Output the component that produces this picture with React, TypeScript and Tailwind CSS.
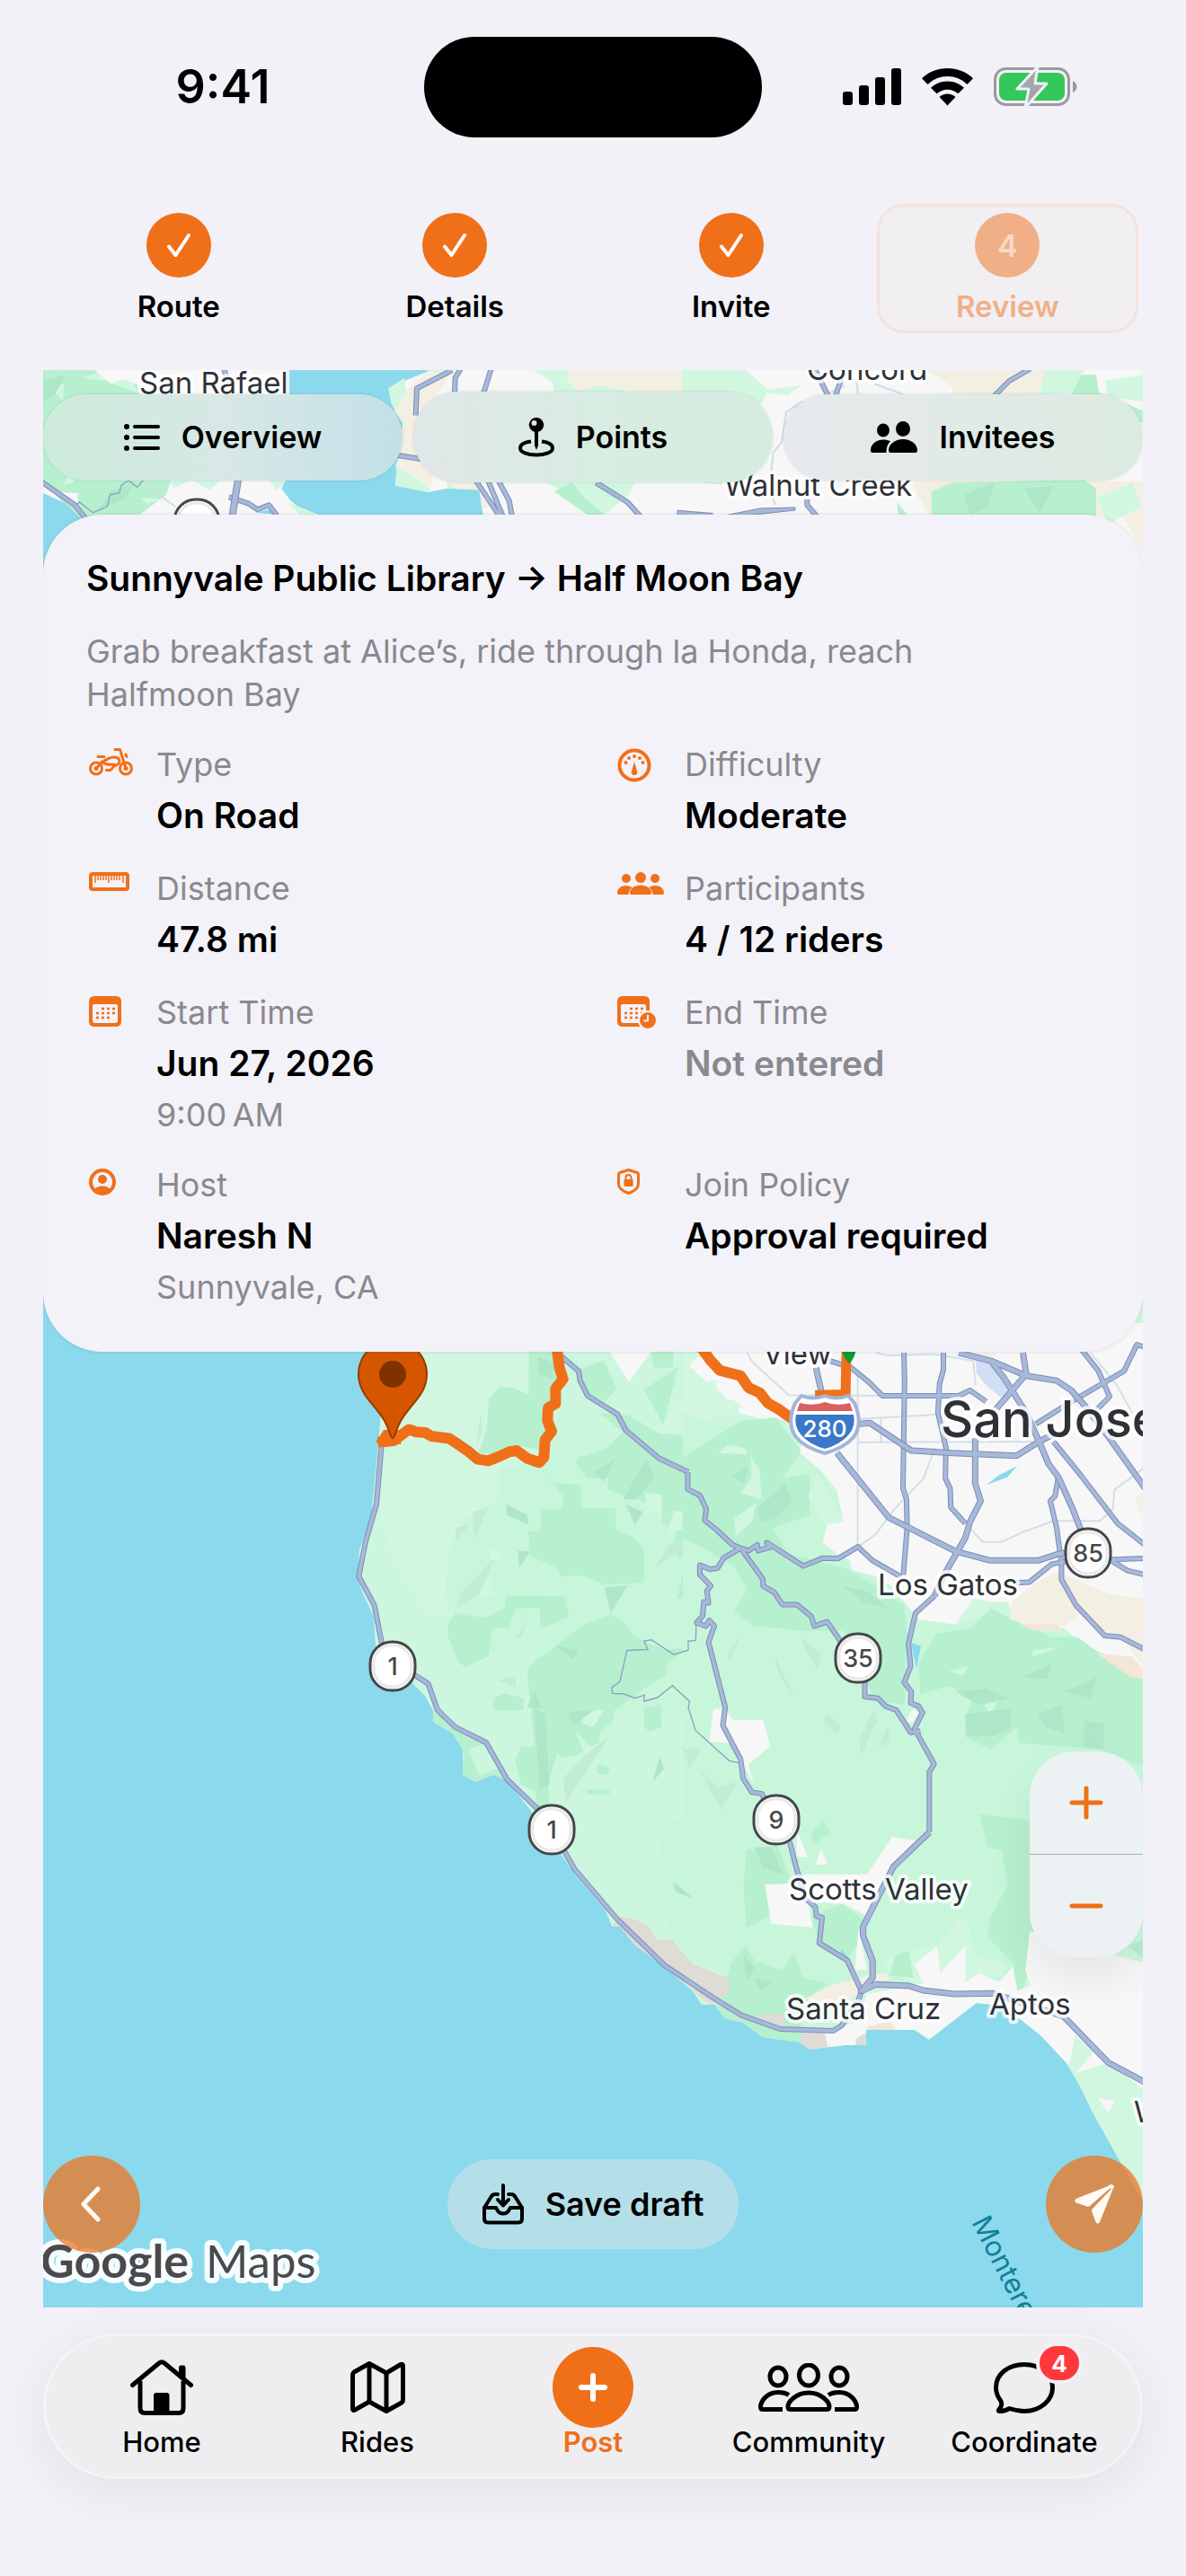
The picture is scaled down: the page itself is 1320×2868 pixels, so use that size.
import React, { useState } from 'react';

const ORANGE = '#f07019';

/* ---------- Map ---------- */

// Each tile keeps its own local grid and is placed on the map by a transform.
const TILE_WEST = 'translate(340 1480) scale(0.33333 0.35714)';
const TILE_EAST = 'translate(760 1480) scale(0.35714)';
const TILE_SOUTH = 'translate(340 1900) scale(0.625 0.33333)';
const TILE_NW = 'translate(40 404) scale(0.33333)';
const TILE_NE = 'translate(540 404) scale(0.33333)';

const GREEN = '#b6f0cf';
const MID = '#c8f6da';
const LIGHT = '#d1f7e1';
const SHADE = '#aee6c8';
const URBAN = '#f7f7f7';
const SAND = '#f4efe3';
const WATER = '#8bd9ed';

type Shape = [string, string];

const westShapes: Shape[] = [
    [LIGHT, 'M250,-10 L860,-10 L830,350 L760,420 L645,440 L650,520 L520,600 L470,720 L480,860 L415,890 L300,720 L255,600 L240,500Z'],
    [MID, 'M650,430 L780,420 L860,350 L1500,350 L1500,1218 L1030,1190 L1000,1290 L870,1250 L800,1020 L540,1000 L500,880 L465,830 L480,690 L520,600 L650,530Z'],
    [GREEN, 'M745,60 L860,60 L850,180 L830,250 L800,380 L700,360 L640,385 L575,390 L605,315 L612,215 L650,180 L700,183 L745,205Z'],
    [GREEN, 'M745,630 L785,630 L785,560 L1035,557 L1037,625 L1095,650 L1130,685 L1132,790 L1000,795 L925,768 L850,770 L840,745 L750,705Z'],
    [GREEN, 'M670,830 L865,832 L880,895 L785,935 L782,868 L700,870 L680,930 L625,930 L610,1020 L535,1052 L512,1040 L475,955 L475,920 L500,885 L600,900 L665,870Z'],
    [GREEN, 'M820,1000 L930,920 L1020,890 L1060,910 L1100,960 L1200,1000 L1275,990 L1205,1045 L1205,1075 L1100,1140 L1030,1190 L1030,1218 L985,1250 L980,1290 L900,1330 L860,1335 L840,1320 L810,1420 L815,1500 L770,1500 L770,1440 L720,1420 L700,1345 L720,1300 L765,1300 L745,1120 L740,1060 L770,1030Z'],
    [GREEN, 'M628,1150 L660,1135 L730,1150 L728,1187 L630,1187Z'],
    [GREEN, 'M1130,1180 L1185,1170 L1190,1240 L1150,1255 L1130,1240Z'],
    [GREEN, 'M975,1355 L1015,1365 L1010,1390 L975,1385Z M940,1435 L1015,1435 L1015,1450 L940,1450Z'],
    [GREEN, 'M980,262 L1080,268 L1180,325 L1275,330 L1375,320 L1370,410 L1430,430 L1500,450 L1500,870 L1400,860 L1300,830 L1240,840 L1270,720 L1235,700 L1235,640 L1190,600 L1190,570 L1140,540 L1070,520 L1010,500 L1010,465 L940,465 L905,420 L910,400 L1000,375 L1060,320Z'],
    [GREEN, 'M780,430 L830,480 L920,485 L920,560 L860,560 L860,520Z'],
    [GREEN, 'M900,130 L995,97 L1040,185 L1000,225 L940,200Z M1130,190 L1245,115 L1195,297Z M1150,60 L1230,60 L1225,120 L1165,120Z'],
    [GREEN, 'M418,1180 L440,1190 L500,1240 L600,1290 L545,1310 L580,1390 L640,1370 L670,1400 L630,1392 L570,1412 L525,1390 L527,1310 L495,1260 L430,1230Z'],
    [LIGHT, 'M1235,230 L1345,225 L1350,310 L1290,320 L1180,325Z M1135,510 L1190,515 L1190,575 L1140,570Z M1230,565 L1280,570 L1285,610 L1205,645Z M1370,320 L1500,310 L1500,420 L1372,410Z'],
    [LIGHT, 'M620,680 L662,705 L615,730Z M610,770 L632,832 L580,835Z M930,1190 L1000,1185 L960,1240 L925,1230Z M900,1250 L950,1300 L985,1290 L940,1340Z'],
    [SHADE, 'M775,85 L830,105 L825,155 L780,140Z M963,445 L1035,405 L995,475Z M1062,530 L1135,405 L1168,460 L1105,530Z M1070,545 L1128,570 L1100,610Z M670,545 L740,578 L745,608 L675,580Z M708,690 L750,692 L715,742Z'],
    [SHADE, 'M998,805 L1075,798 L1020,885Z M830,985 L910,1000 L895,1030Z M765,1130 L790,1180 L740,1178Z M870,1195 L965,1185 L895,1235Z M765,1180 L800,1200 L815,1420 L780,1430Z M1255,1300 L1325,1315 L1290,1350Z M1182,1330 L1197,1370 L1160,1410Z'],
    ['#c1edd5', 'M500,620 L545,610 L505,665Z M558,570 L610,555 L565,655Z M635,710 L575,830 L505,865 L520,820Z M585,260 L590,320 L570,365Z M640,1095 L700,1080 L705,1118Z M745,900 L720,960 L700,965Z M1018,1265 L870,1475 L860,1400 L930,1330Z M1320,1370 L1370,1410 L1440,1400 L1370,1465Z M1350,630 L1165,742 L1215,670Z'],
    [URBAN, 'M1010,60 L1160,60 L1080,165Z M1275,145 L1310,87 L1400,100 L1420,150 L1340,165Z M1365,165 L1440,160 L1500,190 L1410,220Z'],
];

const eastShapes: Shape[] = [
    [MID, 'M0,260 L400,400 L700,850 L1434,1000 L1434,1568 L0,1568Z'],
    [GREEN, 'M0,400 L180,285 L290,275 L370,380 L310,465 L395,450 L395,580 L280,620 L330,700 L520,750 L600,800 L690,860 L700,960 L690,1170 L600,1160 L500,940 L380,940 L220,925 L160,880 L200,810 L160,740 L60,680 L0,650Z'],
    [URBAN, 'M40,-20 L110,200 L175,260 L290,275 L330,290 L370,350 L365,385 L430,440 L480,500 L500,600 L450,610 L435,665 L480,700 L520,720 L525,750 L600,770 L650,800 L690,850 L735,905 L850,920 L900,880 L905,840 L960,850 L1010,850 L1040,910 L1130,940 L1190,930 L1250,990 L1310,1010 L1400,1080 L1440,1090 L1440,-20Z'],
    [LIGHT, 'M0,70 L60,73 L110,150 L100,185 L180,235 L170,270 L0,260Z M420,450 L500,600 L440,610 L390,520Z M905,840 L960,850 L920,900 L850,920Z'],
    [URBAN, 'M20,115 L45,85 L130,110 L140,150 L75,165Z M100,165 L180,160 L230,200 L140,220Z M170,260 L240,225 L300,270 L250,280Z'],
    [GREEN, 'M735,1040 L790,950 L900,930 L960,870 L1040,910 L1150,960 L1230,960 L1300,1010 L1434,1090 L1434,1360 L1300,1310 L1050,1290 L1040,1240 L960,1310 L880,1270 L880,1210 L900,1160 L830,1110 L740,1140Z'],
    [SAND, 'M1165,755 L1330,825 L1440,840 L1440,1060 L1360,950 L1290,935 L1250,880 L1190,925 L1090,920 L1020,905 L1025,850 L1100,790Z M905,73 L980,73 L965,100 L905,95Z M1408,525 L1440,505 L1440,575 L1420,570Z'],
    ['#f2e6d6', 'M1050,920 L1165,920 L1185,940 L1090,938Z M1290,1010 L1400,1020 L1434,1060 L1434,1090 L1395,1085Z'],
    [LIGHT, 'M140,360 L195,370 L200,390 L110,385Z M210,395 L240,440 L245,530 L180,510 L215,460Z M160,590 L230,540 L215,600 L165,645Z M830,1065 L890,1050 L870,1080Z M1090,1000 L1180,990 L1090,1020Z M940,1170 L980,1160 L960,1205Z'],
    [SHADE, 'M150,460 L205,425 L190,480Z M235,555 L320,480 L340,540 L290,590 L240,600Z M500,800 L580,820 L640,870 L560,850Z M1055,1085 L1150,1045 L1135,1090Z M1190,1130 L1290,1085 L1270,1150Z M850,1130 L940,1120 L1020,1150 L920,1170Z M880,1200 L960,1190 L1025,1180 L1020,1240 L960,1270 L885,1265Z M1105,1200 L1180,1170 L1190,1260 L1130,1240Z M1250,1220 L1315,1230 L1310,1310 L1250,1300Z'],
    ['#c1edd5', 'M180,950 L140,1010 L145,1040Z M285,1010 L320,1090 L355,1150 L300,1080Z M370,960 L430,1010 L420,1060 L380,1000Z M450,1200 L490,1230 L485,1260 L437,1232Z M595,1185 L605,1220 L555,1330 L550,1280Z M640,1240 L645,1290 L605,1300Z M0,1310 L60,1305 L20,1370Z M50,1370 L110,1430 L170,1410 L120,1500Z'],
    [URBAN, 'M95,1185 L130,1180 L155,1217 L250,1218 L273,1300 L205,1355 L220,1415 L185,1350 L150,1290 L82,1285Z M715,1183 L735,1195 L715,1225 L695,1225Z'],
    ['#d2def5', 'M913,95 L965,108 L1030,195 L990,212 L940,170 L915,135Z'],
    [WATER, 'M945,485 L985,455 L1043,425 L1010,462Z M710,976 L742,988 L728,1058Z'],
];

const southShapes: Shape[] = [
    [MID, 'M640,380 L800,380 L1434,380 L1434,900 L1000,930 L850,1000 L760,900 L690,850 L650,760 L620,600Z'],
    [LIGHT, 'M1040,830 L1130,790 L1160,710 L1180,720 L1190,830 L1250,860 L1240,900 L1090,930 L1030,880Z M1375,1090 L1500,1230 L1500,1700 L1470,1640 L1380,1270Z'],
    [GREEN, 'M785,480 L840,460 L860,560 L870,590 L820,600 L825,700 L785,740 L780,600Z M700,870 L750,905 L760,850 L785,800 L800,850 L850,880 L870,820 L885,905 L930,925 L895,975 L880,1080 L845,1077 L750,1000Z M900,700 L955,660 L1000,720 L985,790 L965,840 L915,790Z M1040,900 L1050,830 L1075,815 L1082,905Z M900,430 L920,375 L935,420 L905,460Z'],
    [GREEN, 'M1200,360 L1290,380 L1300,780 L1285,900 L1275,960 L1262,940 L1262,860 L1215,770 L1220,700 L1250,600 L1240,480 L1215,470Z M1465,800 L1500,770 L1500,850Z M730,990 L780,1030 L845,1077 L885,1090 L895,1130 L815,1105 L745,1040Z'],
    [SHADE, 'M800,470 L830,470 L850,560 L815,540Z M655,585 L690,640 L660,620Z M780,830 L800,870 L785,920Z M800,905 L830,920 L810,950Z'],
    ['#dfdcd5', 'M545,735 L562,703 L585,710 L610,730 L627,780 L652,778 L690,860 L750,905 L755,950 L722,998 L640,870 L585,795 L560,735Z M808,1030 L850,1025 L855,1065 L805,1045Z M885,1090 L925,1090 L930,1137 L898,1145 L880,1120Z'],
    [SAND, 'M890,975 L940,930 L1000,900 L1035,890 L1040,910 L990,960 L930,1000Z'],
    [URBAN, 'M1045,435 L1095,450 L1047,535 L1030,590 L1000,700 L960,660 L895,650 L903,738 L830,725 L818,595 L870,590 L890,560 L1000,560Z M875,415 L895,505 L875,500Z M918,475 L930,525 L908,530Z M985,740 L1000,880 L978,880Z'],
    [URBAN, 'M1000,960 L1100,925 L1085,860 L1125,800 L1130,890 L1175,800 L1175,920 L1200,890 L1235,920 L1260,870 L1268,950 L1290,930 L1282,880 L1290,750 L1500,860 L1500,1290 L1430,1190 L1372,1225 L1310,1100 L1270,1040 L1235,1000 L1195,990 L1110,1112 L1085,1080 L998,1080 L998,1132 L930,1137 L925,1090 L985,1050Z'],
    [LIGHT, 'M1370,1100 L1405,1150 L1372,1225 L1360,1200Z M1372,1225 L1430,1190 L1500,1290 L1500,1400 L1400,1320Z'],
    [URBAN, 'M1410,1307 L1442,1317 L1430,1357Z'],
    ['#dfdcd5', 'M980,1110 L998,1090 L998,1132 L980,1130Z'],
    ['#f2e6d6', 'M1000,1070 L1040,1050 L1053,1080 L1000,1080Z'],
    [WATER, 'M955,810 L966,840 L950,835Z'],
];

const nwShapes: Shape[] = [
    [URBAN, 'M24,24 L1560,24 L1560,560 L24,560Z'],
    [GREEN, 'M24,24 L330,24 L345,100 L450,300 L450,395 L435,440 L350,505 L165,540 L24,400Z'],
    [LIGHT, 'M50,85 L95,70 L90,125Z M150,50 L240,24 L320,60 L340,100 L230,60Z M90,410 L130,330 L125,400Z M350,450 L430,455 L370,470Z M450,395 L520,390 L460,420Z M520,390 L620,390 L580,425Z M780,392 L845,392 L800,425Z'],
    [SHADE, 'M24,60 L100,40 L60,110 L24,130Z M250,430 L330,400 L300,450 L200,500Z'],
    [URBAN, 'M195,24 L340,24 L345,75 L290,55 L250,70Z M30,430 L140,435 L140,470 L110,460Z'],
    [WATER, 'M24,435 L100,470 L170,540 L170,900 L24,900Z'],
    [WATER, 'M837,24 L1320,24 L1230,60 L1177,85 L1200,165 L1225,200 L1215,310 L1205,345 L1200,410 L1310,432 L1370,420 L1480,420 L1490,490 L1500,540 L945,540 L850,460 L820,420 L835,390Z M735,500 L780,490 L805,507Z'],
    [LIGHT, 'M1177,85 L1230,50 L1237,100 L1200,165 L1185,130Z M1205,345 L1315,415 L1312,432 L1200,410Z M1300,24 L1370,24 L1345,40Z M1370,395 L1470,395 L1480,425 L1375,420Z M840,465 L890,485 L945,507 L880,507Z'],
    [SAND, 'M1300,35 L1390,30 L1345,100 L1280,200 L1330,330 L1320,415 L1200,345 L1215,300 L1225,200 L1200,160 L1240,90Z M1370,395 L1460,400 L1510,480 L1490,490 L1480,420 L1400,420Z'],
];

const neShapes: Shape[] = [
    [LIGHT, 'M160,24 L275,24 L385,75 L500,100 L230,100 L225,65Z M655,24 L870,24 L945,90 L1055,75 L1010,108 L940,100 L920,140 L850,110 L660,100Z M200,400 L500,400 L480,440 L400,507 L300,450Z'],
    [SAND, 'M285,24 L655,24 L660,100 L500,95 L380,75 L310,95 L270,50Z M1475,24 L1900,24 L1850,110 L1560,110 L1560,80Z M1420,395 L1560,395 L2120,395 L2196,395 L2196,640 L2130,507 L1480,507Z'],
    [GREEN, 'M230,430 L290,400 L330,450 L400,507 L340,507Z M1375,465 L1410,507 L1378,507Z M1490,430 L1560,400 L2000,390 L2040,420 L2040,540 L1490,540Z M1960,40 L2040,40 L2050,100 L2196,160 L2196,200 L1990,180 L1960,100Z'],
    [LIGHT, 'M1870,24 L2000,24 L1960,100 L1850,110Z M2070,60 L2196,40 L2196,130 L2080,110Z M2040,450 L2160,400 L2190,480 L2080,540Z M725,400 L800,390 L790,408Z'],
    [SHADE, 'M1600,440 L1700,400 L1680,480 L1620,507Z M1800,420 L1900,410 L1850,500Z'],
];

const minorEast = [
    'M200,73 L215,100 L330,205 L620,207',
    'M545,140 L545,678',
    'M545,352 L1090,350',
    'M600,73 L640,82 L780,77 L905,98 L912,175',
    'M545,280 L800,265 M617,280 V352',
    'M785,370 L750,465 L660,560 L600,640 L546,678',
    'M880,605 L935,663 L995,662 L1060,632 L1155,597 L1300,597 L1340,560 L1345,500 L1440,430',
    'M1270,73 L1350,170 L1400,260',
];

const roadsEast = [
    'M455,97 L525,120 L580,165 L622,207 L860,207 L895,190 L945,225',
    'M689,73 L691,160 L686,495 L697,530 L699,620 L687,765',
    'M812,73 L812,125 L800,170 L795,260 L820,370 L818,465 L833,495 L835,555 L880,605',
    'M785,830 L725,885 L703,980 L710,1050 L690,1100 L712,1130 L710,1165 L735,1175 L747,1195 L722,1245 L783,1355 L768,1380 L768,1568',
    'M1240,60 L1295,130 L1330,210 L1290,250',
    'M1440,55 L1415,48 L1375,130 L1220,220 L1100,295',
    'M1155,350 L1240,455 L1355,605 L1440,672',
    'M1170,460 L1160,520 L1145,535 L1165,620 L1180,730 L1180,780 L1225,860 L1315,955 L1365,960 L1440,998',
    'M1330,718 L1440,714',
    'M1330,718 L1385,752 L1440,765',
    'M1040,790 L1080,788 L1150,732 L1200,722',
    'M15,445 L15,498 L53,518 L73,560 L68,595 L105,625 L155,672 L180,682 L205,690 L232,672 L235,690 L270,680 L262,665 L375,738 L437,713 L483,715 L546,678 L590,720 L680,772',
    'M180,682 L250,780 L250,800 L285,820 L310,858 L355,858 L400,895 L410,925 L450,912 L500,985',
    'M567,1090 L567,1145 L608,1150 L632,1175 L665,1187 L710,1257 L740,1252',
    'M180,682 L128,712 L108,745 L85,748 L53,735 L53,765 L87,800 L75,815 L80,853 L65,850 L62,893 L43,915 L72,925 L82,907 L98,925 L80,975 L132,1178 L125,1235 L180,1340 L188,1400 L215,1443 L247,1448 L258,1480',
];

const highwaysEast = [
    'M415,120 L432,195',
    'M550,295 L583,292 L712,378 L840,386 L1040,394 L1110,350 L1160,325',
    'M480,385 L642,587 L850,692 L955,720 L1110,720 L1170,700 L1200,695',
    'M911,340 L911,480 L928,535 L895,600 L880,650 L820,755 L785,830',
    'M860,73 L965,100 L1070,145 L1165,160 L1210,190 L1250,235 L1330,340 L1440,495',
    'M1060,73 L1070,140 L975,250',
    'M965,105 L1000,150 L1070,260 L1110,350 L1140,420 L1170,460 L1215,560 L1240,625',
];

const roadsWest = [
    'M855,85 L912,130 L917,160 L942,207 L1042,265 L1070,315 L1180,402 L1278,445',
    'M255,350 L237,545 L200,665 L178,770 L230,860 L255,980',
    'M360,1075 L410,1105 L440,1185 L455,1200 L500,1240 L603,1288 L673,1403 L775,1495',
];

const roadsSouth = [
    'M460,480 L480,545 L555,710 L640,865 L720,965 L775,1030 L845,1077 L940,1083 L955,1065 L985,980 L990,950',
    'M862,450 L875,545 L890,640 L908,670 L910,700 L920,705 L915,790 L965,848 L990,950',
];

const highwaysSouth = [
    'M1111,420 L1047,535 L993,735 L993,765 L1010,850 L1010,905 L990,950 L1015,928 L1075,933 L1100,948 L1155,960 L1225,958 L1350,1035 L1430,1190 L1500,1260',
];

const roadsNw = [
    'M20,398 L130,475 L170,525',
    'M645,448 L710,470 L740,490 L778,475 L805,510',
    'M1390,24 L1272,85 L1268,175',
    'M1418,20 L1400,50 L1398,100',
    'M1520,20 L1495,100',
    'M1205,308 L1290,322',
    'M628,20 L640,60',
    'M1470,395 L1550,515 M1510,395 L1560,515 M1545,395 L1580,460 L1590,515',
];

const roadsNe = [
    'M370,400 L475,465 L520,515',
    'M1100,20 L1145,110',
    'M1190,50 L1170,110',
    'M1075,455 L1075,475 L1110,515',
    'M640,500 L760,510',
    'M1820,20 L1750,60 L1700,110',
];

const Fills: React.FC<{ tile: string; shapes: Shape[] }> = ({ tile, shapes }) => (
    <g transform={tile}>
        {shapes.map(([fill, d]) => (
            <path key={d} d={d} fill={fill} />
        ))}
    </g>
);

const Roads: React.FC<{ tile: string; paths: string[]; width: number }> = ({ tile, paths, width }) => (
    <g transform={tile} fill="none" strokeLinejoin="round">
        {paths.map((d) => (
            <path key={d} d={d} stroke="#7b8db9" strokeWidth={width} vectorEffect="non-scaling-stroke" />
        ))}
        {paths.map((d) => (
            <path key={d} d={d} stroke="#a7b8d8" strokeWidth={width - 2} vectorEffect="non-scaling-stroke" />
        ))}
    </g>
);

const RouteShield: React.FC<{ x: number; y: number; label?: string }> = ({ x, y, label }) => (
    <g>
        <rect x={x - 25} y={y - 27} width="50" height="54" rx="24" fill="#fff" stroke="#45474a" strokeWidth="3" />
        <rect x={x - 21} y={y - 23} width="42" height="46" rx="20" fill="none" stroke="#e9e9ea" strokeWidth="3" />
        {label && <text x={x} y={y + 10} fontSize="27" fontWeight="500" textAnchor="middle" fill="#45474a">{label}</text>}
    </g>
);

const places = [
    { name: 'San Rafael', x: 155, y: 438 },
    { name: 'Concord', x: 898, y: 423 },
    { name: 'Walnut Creek', x: 806, y: 552 },
    { name: 'View', x: 849, y: 1519 },
    { name: 'Los Gatos', x: 977, y: 1776 },
    { name: 'Scotts Valley', x: 878, y: 2115 },
    { name: 'Santa Cruz', x: 875, y: 2248 },
    { name: 'Aptos', x: 1101, y: 2243 },
    { name: 'Watsonville', x: 1262, y: 2363 },
];

const RouteMap: React.FC = () => (
    <svg
        className="absolute inset-0 h-full w-full"
        viewBox="48 412 1224 2157"
        preserveAspectRatio="xMidYMid slice"
        fontFamily="Inter, 'Liberation Sans', sans-serif"
        aria-hidden="true"
    >
        <defs>
            <clipPath id="land">
                <path d="M424,1400 L424,1574 L418,1640 L413,1690 L400,1725 L398,1757 L402,1770 L416,1800 L418,1832 L430,1865 L455,1870 L473,1888 L482,1905 L482,1917 L504,1930 L515,1948 L515,1976 L529,1984 L549,1976 L564,1982 L590,2015 L640,2087 L674,2127 L681,2145 L690,2145 L706,2165 L740,2190 L771,2217 L781,2232 L796,2232 L806,2247 L827,2252 L849,2268 L890,2274 L901,2282 L940,2277 L964,2277 L964,2260 L1018,2260 L1034,2271 L1087,2230 L1112,2233 L1134,2247 L1159,2267 L1187,2297 L1202,2323 L1215,2350 L1243,2400 L1280,2465 L1280,1400Z" />
            </clipPath>
        </defs>
        <rect x="48" y="412" width="1224" height="2157" fill={WATER} />
        <g clipPath="url(#land)">
            <rect x="380" y="1400" width="900" height="1100" fill="#cdf6df" />
            <Fills tile={TILE_WEST} shapes={westShapes} />
            <Fills tile={TILE_EAST} shapes={eastShapes} />
            <Fills tile={TILE_SOUTH} shapes={southShapes} />
        </g>
        <Fills tile={TILE_NW} shapes={nwShapes} />
        <rect x="556" y="412" width="724" height="250" fill={URBAN} />
        <Fills tile={TILE_NE} shapes={neShapes} />

        {/* Minor streets */}
        <g transform={TILE_EAST} fill="none" stroke="#d5dee8">
            {minorEast.map((d) => (
                <path key={d} d={d} strokeWidth="2" vectorEffect="non-scaling-stroke" />
            ))}
        </g>
        <g transform={TILE_NE} fill="none" stroke="#d5dee8" strokeWidth="7">
            <path d="M1060,128 L1005,165 L990,265 L962,300 L955,365 L958,440 L968,475 M1240,60 L1245,110 M1300,70 L1395,105 M1140,105 L1200,75" />
        </g>
        <g transform={TILE_NW} fill="none" stroke="#8f9fc0" strokeWidth="4">
            <path d="M135,475 L145,465 L190,500 L238,480 L248,440 L278,435 L285,410 L308,392 L338,415 L360,390" />
            <path d="M370,390 L430,455 L465,480" stroke="#d5dee8" strokeWidth="6" />
        </g>
        <g transform={TILE_WEST} fill="none" stroke="#8f9fc4">
            <path
                d="M1305,915 L1303,970 L1278,972 L1278,1000 L1230,1014 L1155,968 L1130,972 L1143,998 L1073,1001 L1050,1098 L1023,1117 L1025,1135 L1062,1136 L1100,1150 L1132,1140 L1130,1160 L1175,1148 L1225,1111 L1283,1160 L1278,1178 L1302,1250 L1415,1345 L1450,1352"
                strokeWidth="4"
            />
        </g>

        <Roads tile={TILE_WEST} paths={roadsWest} width={6} />
        <Roads tile={TILE_EAST} paths={roadsEast} width={6} />
        <Roads tile={TILE_EAST} paths={highwaysEast} width={7} />
        <Roads tile={TILE_SOUTH} paths={roadsSouth} width={6} />
        <Roads tile={TILE_SOUTH} paths={highwaysSouth} width={7} />
        <Roads tile={TILE_NW} paths={roadsNw} width={6} />
        <Roads tile={TILE_NW} paths={['M675,390 L655,515']} width={8} />
        <Roads tile={TILE_NE} paths={roadsNe} width={6} />
        <path d="M885,565 L846,566 L806,574 L840,573 L885,568Z" fill="#a7b8d8" stroke="#7b8db9" />

        {/* Planned route */}
        <g fill="none" stroke={ORANGE} strokeLinejoin="round">
            <path
                transform={TILE_WEST}
                d="M242,352 L295,347 L345,312 L370,320 L400,322 L420,333 L480,340 L515,362 L540,378 L575,405 L610,410 L650,395 L680,382 L705,378 L740,402 L780,415 L796,400 L800,345 L822,318 L808,285 L810,245 L835,232 L835,185 L860,155 L848,120 L838,50"
                strokeWidth="12"
                vectorEffect="non-scaling-stroke"
            />
            <path
                transform={TILE_EAST}
                d="M60,60 L85,95 L115,128 L180,145 L205,182 L240,198 L265,230 L300,250 L345,282"
                strokeWidth="12"
                vectorEffect="non-scaling-stroke"
            />
            <path transform={TILE_EAST} d="M412,205 L507,203 L510,60" strokeWidth="11" strokeLinejoin="miter" vectorEffect="non-scaling-stroke" />
        </g>
        <path d="M418,1606 L427,1592 H448 L446,1608Z" fill={ORANGE} />
        <path d="M937,1500 H953 Q952,1512 945,1518 Q938,1512 937,1500Z" fill="#0b9a33" />

        {/* Destination pin */}
        <path d="M437,1601 C434,1601 434,1592 428,1582 C416,1562 399,1552 399,1530 A38,38 0 0 1 475,1530 C475,1552 458,1562 446,1582 C440,1592 440,1601 437,1601Z" fill="#d65600" stroke="#963c00" strokeWidth="2" />
        <circle cx="437" cy="1530" r="15" fill="#7d3200" />

        {/* Interstate badge */}
        <path d="M892,1554 Q905,1559 918,1554 Q931,1559 944,1554 L951,1562 Q961,1585 950,1600 Q940,1612 918,1618 Q896,1612 886,1600 Q875,1585 885,1562Z" fill="#fff" stroke="#a3b4da" strokeWidth="4" />
        <path d="M890,1562 Q905,1566 918,1561 Q931,1566 946,1562 L949,1571 H887Z" fill="#da6062" />
        <path d="M886,1575 H950 Q953,1588 944,1598 Q934,1609 918,1613 Q902,1609 892,1598 Q883,1588 886,1575Z" fill="#3a79c9" />
        <text x="918" y="1600" fontSize="26" fontWeight="500" textAnchor="middle" fill="#fff">280</text>

        <RouteShield x={219} y={583} />
        <RouteShield x={437} y={1855} label="1" />
        <RouteShield x={614} y={2037} label="1" />
        <RouteShield x={955} y={1846} label="35" />
        <RouteShield x={864} y={2026} label="9" />
        <RouteShield x={1211} y={1729} label="85" />

        <g fill="#2f3136" stroke="#fff" strokeOpacity="0.8" strokeLinejoin="round" paintOrder="stroke" fontSize="33" strokeWidth="8">
            {places.map((place) => (
                <text key={place.name} x={place.x} y={place.y}>{place.name}</text>
            ))}
            <text x="1047" y="1600" fontSize="56" fontWeight="500">San Jose</text>
        </g>
        <text transform="translate(1081 2474) rotate(63)" fontSize="31" fill="#0f7f96">Monterey Bay</text>

        <g fill="#4a4a4c" stroke="#fff" strokeOpacity="0.9" strokeLinejoin="round" paintOrder="stroke" strokeWidth="12" fontSize="52" fontFamily="Lato, 'Open Sans', sans-serif">
            <text x="45" y="2536" fontWeight="700">Google</text>
            <text x="229" y="2536" fontSize="51">Maps</text>
        </g>
    </svg>
);

/* ---------- Icons ---------- */

const SignalIcon = () => (
    <svg width="65" height="42" viewBox="0 0 65 42">
        <rect x="0" y="26" width="11" height="15" rx="3" />
        <rect x="18" y="19" width="11" height="22" rx="3" />
        <rect x="36" y="10" width="11" height="31" rx="3" />
        <rect x="54" y="0" width="11" height="41" rx="3" />
    </svg>
);

const WifiIcon = () => (
    <svg width="57" height="42" viewBox="0 0 57 42">
        <path d="M28.5 0C39.6 0 49.7 4.2 57 11.3L50.5 18A31.5 31.5 0 0 0 6.5 18L0 11.3C7.3 4.2 17.4 0 28.5 0Z" />
        <path d="M28.5 14.5C35.7 14.5 42.2 17.3 47 21.7L40.4 28.3A17.5 17.5 0 0 0 16.6 28.3L10 21.7C14.8 17.3 21.3 14.5 28.5 14.5Z" />
        <path d="M28.5 28.5C32 28.5 35 29.8 37.5 32L28.5 41.5L19.5 32C22 29.8 25 28.5 28.5 28.5Z" />
    </svg>
);

const BatteryIcon = () => (
    <svg width="93" height="46" viewBox="0 0 93 46">
        <rect x="1.5" y="2.5" width="82" height="40" rx="12" fill="none" stroke="#9a9a9e" strokeWidth="3" />
        <rect x="6" y="7" width="73" height="31" rx="8" fill="#34c759" />
        <path d="M88 16C91 17.5 92.5 20 92.5 22.5S91 27.5 88 29Z" fill="#9a9a9e" />
        <path d="M49 0L26 25H39L35 46L59 19H46Z" fill="#a5a5ab" stroke="#f2f1f7" strokeWidth="3" strokeLinejoin="round" />
    </svg>
);

const CheckIcon = () => (
    <svg width="30" height="30" viewBox="0 0 30 30" fill="none" stroke="#fff" strokeWidth="4" strokeLinecap="round" strokeLinejoin="round">
        <path d="M4 16.5L11.5 26L26 4" />
    </svg>
);

const ListIcon = () => (
    <svg width="40" height="30" viewBox="0 0 40 30">
        <circle cx="3" cy="3" r="3" />
        <circle cx="3" cy="15" r="3" />
        <circle cx="3" cy="27" r="3" />
        <rect x="10" y="1" width="30" height="4" rx="2" />
        <rect x="10" y="13" width="30" height="4" rx="2" />
        <rect x="10" y="25" width="30" height="4" rx="2" />
    </svg>
);

const PointsIcon = () => (
    <svg width="40" height="44" viewBox="0 0 40 44">
        <path fillRule="evenodd" d="M20 0A8 8 0 0 1 22 15.8V31L20 36L18 31V15.8A8 8 0 0 1 20 0ZM17.5 3A3 3 0 1 0 17.5 9A3 3 0 1 0 17.5 3Z" />
        <path d="M14 26.5C6 27.5 2 30.5 2 34C2 38.5 10 41.5 20 41.5S38 38.5 38 34C38 30.5 34 27.5 26 26.5" fill="none" stroke="#000" strokeWidth="4" />
    </svg>
);

const PairIcon = () => (
    <svg width="52" height="35" viewBox="0 0 52 35">
        <ellipse cx="14" cy="10" rx="7" ry="7.5" />
        <ellipse cx="36" cy="8.5" rx="8" ry="8.5" />
        <path d="M2 35Q0 35 0 32C0 26 6 20.5 14 20.5C17 20.5 19.5 21 22 22.3C19 25.5 17.5 29 17.5 35Z" />
        <path d="M22 35Q20 35 20 32C20 26 27 20 36 20S52 26 52 32Q52 35 50 35Z" />
    </svg>
);

const MotorcycleIcon = () => (
    <svg width="49" height="31" viewBox="0 0 49 31" fill="none" stroke={ORANGE} strokeWidth="3" strokeLinecap="round" strokeLinejoin="round">
        <circle cx="8" cy="22.5" r="6.5" />
        <circle cx="41" cy="22.5" r="6.5" />
        <circle cx="8" cy="22.5" r="1" />
        <circle cx="41" cy="22.5" r="1" />
        <path d="M10 9.500H17M8 22C12 20 14 14 22 11.5C27 8.5 34 10 34 14.5C34 18 31 19 28 20L24 24.5H19.5M14 15C18 18 22 19 28 18M29 1.5H34.5L41 22M41 7L42 9.5" />
    </svg>
);

const RulerIcon = () => (
    <svg width="45" height="21" viewBox="0 0 45 21" fill="none" stroke={ORANGE}>
        <rect x="2" y="2" width="41" height="17" rx="2" strokeWidth="4" />
        <path d="M7 4V12M10 4V9M13 4V9M16 4V9M19 4V9M22 4V12M25 4V9M28 4V9M31 4V9M34 4V9M38 4V12" strokeWidth="1.5" />
    </svg>
);

const CalendarDots = () => (
    <path d="M14 14h3M20 14h3M26 14h3M8 19h3M14 19h3M20 19h3M26 19h3M8 24h3M14 24h3M20 24h3" stroke={ORANGE} strokeWidth="2.5" />
);

const CalendarIcon = () => (
    <svg width="36" height="34" viewBox="0 0 36 34">
        <path fillRule="evenodd" fill={ORANGE} d="M6 0H30Q36 0 36 6V28Q36 34 30 34H6Q0 34 0 28V6Q0 0 6 0ZM6 9Q4 9 4 11V27Q4 30 7 30H29Q32 30 32 27V11Q32 9 30 9Z" />
        <CalendarDots />
    </svg>
);

const CalendarClockIcon = () => (
    <svg width="44" height="37" viewBox="0 0 44 37">
        <path fillRule="evenodd" fill={ORANGE} d="M6 0H30Q36 0 36 6V28Q36 34 30 34H6Q0 34 0 28V6Q0 0 6 0ZM6 9Q4 9 4 11V27Q4 30 7 30H29Q32 30 32 27V11Q32 9 30 9Z" />
        <CalendarDots />
        <circle cx="34" cy="27" r="10" fill={ORANGE} stroke="#f3f2f8" strokeWidth="2" />
        <path d="M34 21V27.5H29.5" fill="none" stroke="#f3f2f8" strokeWidth="2" />
    </svg>
);

const HostIcon = () => (
    <svg width="30" height="30" viewBox="0 0 30 30">
        <circle cx="15" cy="15" r="13" fill="none" stroke={ORANGE} strokeWidth="4" />
        <circle cx="15" cy="12" r="5" fill={ORANGE} />
        <path d="M6 24C8 20.5 11 19.5 15 19.5S22 20.5 24 24C21.5 27 18 28 15 28S8.5 27 6 24Z" fill={ORANGE} />
    </svg>
);

const GaugeIcon = () => (
    <svg width="38" height="38" viewBox="0 0 38 38">
        <circle cx="19" cy="19" r="16.5" fill="none" stroke={ORANGE} strokeWidth="4" />
        <g fill={ORANGE}>
            <circle cx="9.5" cy="16" r="2" />
            <circle cx="13" cy="11" r="2" />
            <circle cx="19" cy="9" r="2" />
            <circle cx="25" cy="11" r="2" />
            <circle cx="28.5" cy="16" r="2" />
            <path d="M19 15L22.3 26.5Q22.300 30 19 30T15.7 26.5Z" />
        </g>
    </svg>
);

const GroupIcon = () => (
    <svg width="52" height="26" viewBox="0 0 52 26" fill={ORANGE}>
        <circle cx="10" cy="7" r="5" />
        <circle cx="42" cy="7" r="5" />
        <circle cx="26" cy="6" r="6" />
        <path d="M1.500 25Q0 25 0 23C0 18.5 4 15 10 15Q14 15 16.5 17C14 19 12.5 22 12.5 25Z" />
        <path d="M50.5 25Q52 25 52 23C52 18.5 48 15 42 15Q38 15 35.5 17C38 19 39.5 22 39.5 25Z" />
        <path d="M15.5 25Q14 25 14 23C14 18.5 19 14.5 26 14.5S38 18.5 38 23Q38 25 36.5 25Z" />
    </svg>
);

const ShieldIcon = () => (
    <svg width="25" height="29" viewBox="0 0 25 29">
        <path d="M12.5 1.5L22 4.5Q23.5 5 23.5 6.5V17C23.5 22 18 25.5 12.5 27.5C7 25.5 1.5 22 1.5 17V6.5Q1.5 5 3 4.5Z" fill="none" stroke={ORANGE} strokeWidth="3" />
        <rect x="7.5" y="12" width="10" height="8" rx="1" fill={ORANGE} />
        <path d="M9.5 12V10A3 3 0 0 1 15.5 10V12" fill="none" stroke={ORANGE} strokeWidth="2" />
    </svg>
);

const DraftIcon = () => (
    <svg width="46" height="46" viewBox="0 0 46 46" fill="none" stroke="#000" strokeWidth="4" strokeLinecap="round" strokeLinejoin="round">
        <path d="M17 12H14Q11 12 9.5 15L2 27V39Q2 43.5 6 43.5H40Q44 43.5 44 39V27L36.5 15Q35 12 32 12H29" />
        <path d="M2 27H15C16 27 16 33.5 23 33.5S30 27 31 27H44M23 2V23M17 18L23 24.5L29 18" />
    </svg>
);

const PlaneIcon = () => (
    <svg width="44" height="44" viewBox="0 0 44 44" fill="#fffaf5">
        <path d="M41 .5Q43 0 42 2L17 24Q15 25.5 12 24L2 20.5Q-1 18.5 1.5 16Z" />
        <path d="M43.5 3Q44.5 1 43 3L20 27Q18.5 29 19.5 31L23.5 42Q25.5 45 28 42Z" />
        <path d="M38 0.8Q43.5 -1 43.9 3L42 5L37 4.5Z" />
    </svg>
);

const HomeIcon = () => (
    <svg width="70" height="62" viewBox="0 0 70 62">
        <path d="M2.5 28.5L32 4Q35 1.5 38 4L67.5 28.5" fill="none" stroke="#000" strokeWidth="5" strokeLinecap="round" />
        <path d="M11 24V54Q11 59.5 16 59.5H54Q59 59.5 59 54V24" fill="none" stroke="#000" strokeWidth="5" />
        <path d="M26 60V40Q26 37 29 37H40.5Q43.5 37 43.5 40V60Z" />
        <path d="M54 17V9Q54 6.5 56 6.5H59.5Q61.5 6.5 61.5 9V25Z" />
    </svg>
);

const FoldedMapIcon = () => (
    <svg width="61" height="58" viewBox="0 0 61 58" fill="none" stroke="#000" strokeWidth="5" strokeLinejoin="round">
        <path d="M2.5 15Q2.5 13 4 12L21 2.5L40 13L56 3.5Q58.5 2.5 58.5 5V43Q58.5 45 57 46L40 55.5L21 45L5 54Q2.5 55.5 2.5 53Z" />
        <path d="M21 3V45M40 13V55" />
    </svg>
);

const CommunityIcon = () => (
    <svg width="112" height="55" viewBox="0 0 112 55" fill="none" stroke="#000" strokeWidth="5">
        <ellipse cx="22" cy="15" rx="9" ry="10" />
        <ellipse cx="90" cy="15" rx="9" ry="10" />
        <ellipse cx="56" cy="13.5" rx="10.5" ry="11.5" />
        <path d="M34 35.5C31 33.5 27 32.5 22 32.5C10 32.5 2.5 42 2.5 49Q2.5 51.5 5 51.5H27" />
        <path d="M78 35.5C81 33.5 85 32.5 90 32.5C102 32.5 109.5 42 109.5 49Q109.5 51.5 107 51.5H85" />
        <path d="M56 33C42 33 33 43 33 48.5Q33 51.5 36 51.5H76Q79 51.5 79 48.5C79 43 70 33 56 33Z" />
    </svg>
);

const ChatIcon = () => (
    <svg width="68" height="57" viewBox="0 0 68 57" fill="none" stroke="#000" strokeWidth="5" strokeLinejoin="round">
        <path d="M34 2.5C52 2.5 65.5 13.5 65.5 28S52 54.5 34 54.5C27.5 54.5 22 53 17.5 51.5C13 54 9.5 55 6 54.5C4.5 54 6 52.5 7.5 50.5C9 48 9 45 7.5 42.5C4 38 2.5 33.5 2.5 28C2.5 13.5 16 2.5 34 2.5Z" />
    </svg>
);

/* ---------- Screen ---------- */

const steps = ['Route', 'Details', 'Invite', 'Review'];

type Detail = {
    icon: React.ReactNode;
    label: string;
    value: string;
    note?: string;
    muted?: boolean;
};

const details: Detail[] = [
    { icon: <MotorcycleIcon />, label: 'Type', value: 'On Road' },
    { icon: <GaugeIcon />, label: 'Difficulty', value: 'Moderate' },
    { icon: <RulerIcon />, label: 'Distance', value: '47.8 mi' },
    { icon: <GroupIcon />, label: 'Participants', value: '4 / 12 riders' },
    { icon: <CalendarIcon />, label: 'Start Time', value: 'Jun 27, 2026', note: '9:00\u2009AM' },
    { icon: <CalendarClockIcon />, label: 'End Time', value: 'Not entered', muted: true },
    { icon: <HostIcon />, label: 'Host', value: 'Naresh N', note: 'Sunnyvale, CA' },
    { icon: <ShieldIcon />, label: 'Join Policy', value: 'Approval required' },
];

const tabs = [
    { name: 'Overview', icon: <ListIcon />, style: 'h-24 bg-linear-to-r from-[#cdebda] via-[#d7e8e6] via-50% to-[#c3e0e8]' },
    { name: 'Points', icon: <PointsIcon />, style: 'h-[101px] bg-linear-to-r from-[#e0e7e8] via-[#d8ece2] via-50% to-[#d6ece0]' },
    { name: 'Invitees', icon: <PairIcon />, style: 'h-24 bg-linear-to-r from-[#e7e9ec] to-[#dbebe0]' },
];

const navItems = [
    { name: 'Home', icon: <HomeIcon /> },
    { name: 'Rides', icon: <FoldedMapIcon /> },
    { name: 'Post', icon: null },
    { name: 'Community', icon: <CommunityIcon /> },
    { name: 'Coordinate', icon: <ChatIcon />, badge: 4 },
];

const App: React.FC = () => {
    const [activeTab, setActiveTab] = useState('Overview');

    return (
        <div className="flex min-h-screen flex-col bg-[#f2f1f7] font-[Inter,'Liberation_Sans',sans-serif] text-black">
            {/* Status bar */}
            <header className="grid grid-cols-[1fr_376px_1fr] items-center pt-[41px]">
                <div className="flex justify-center pl-6 text-[52px] leading-none font-semibold">9:41</div>
                <div className="h-28 rounded-full bg-black" />
                <div className="flex items-center justify-center gap-[23px] pr-8">
                    <SignalIcon />
                    <WifiIcon />
                    <BatteryIcon />
                </div>
            </header>

            {/* Wizard steps */}
            <ol className="mt-[74px] grid grid-cols-4 gap-4 px-[53px]">
                {steps.map((step, index) => {
                    const current = index === steps.length - 1;
                    return (
                        <li key={step}>
                            <button
                                className={`flex w-full flex-col items-center gap-3 rounded-[30px] border-[3px] py-[7px] ${
                                    current ? 'border-[#f4e3dc] bg-[#f1eff2]' : 'border-transparent'
                                }`}
                            >
                                <span
                                    className={`flex size-[72px] items-center justify-center rounded-full text-[34px] font-semibold ${
                                        current ? 'bg-[#f1af87] text-[#f8d9c8]' : 'bg-[#f07019]'
                                    }`}
                                >
                                    {current ? index + 1 : <CheckIcon />}
                                </span>
                                <span className={`text-[33px] leading-10 font-semibold ${current ? 'text-[#f1af87]' : ''}`}>{step}</span>
                            </button>
                        </li>
                    );
                })}
            </ol>

            <main className="relative mx-12 mt-[41px] flex flex-1 flex-col overflow-hidden">
                <RouteMap />

                <div className="relative flex items-center gap-3 pt-6">
                    {tabs.map((tab) => (
                        <button
                            key={tab.name}
                            onClick={() => setActiveTab(tab.name)}
                            aria-pressed={activeTab === tab.name}
                            className={`flex flex-1 items-center justify-center gap-6 rounded-full text-[34px] font-semibold shadow-[0_0_3px_rgba(0,0,0,0.15)] ${tab.style}`}
                        >
                            {tab.icon}
                            {tab.name}
                        </button>
                    ))}
                </div>

                <section className="relative mt-9 rounded-[66px] bg-[#f3f2f8] px-12 pt-11 pb-12 shadow-[0_0_4px_rgba(0,0,0,0.12)]">
                    <h1 className="text-[39px] leading-[54px] font-semibold">Sunnyvale Public Library → Half Moon Bay</h1>
                    <p className="mt-[30px] max-w-[1040px] text-[36px] leading-[48px] text-[#8a898e]">
                        Grab breakfast at Alice’s, ride through la Honda, reach Halfmoon Bay
                    </p>
                    <dl className="mt-[30px] grid grid-cols-2 gap-x-12 gap-y-[30px]">
                        {details.map((item) => (
                            <div key={item.label} className="flex">
                                <div className="w-[78px] shrink-0 pt-[6px] pl-[3px]">{item.icon}</div>
                                <div className="flex flex-col gap-[6px]">
                                    <dt className="text-[36px] leading-[48px] text-[#8a898e]">{item.label}</dt>
                                    <dd className={`text-[39px] leading-[54px] font-semibold ${item.muted ? 'text-[#8a898e]' : ''}`}>{item.value}</dd>
                                    {item.note && <dd className="text-[36px] leading-[48px] text-[#8a898e]">{item.note}</dd>}
                                </div>
                            </div>
                        ))}
                    </dl>
                </section>

                <div className="relative mt-auto flex w-[126px] flex-col self-end overflow-hidden rounded-[50px] bg-[#ecf1f3] shadow-[0_24px_48px_rgba(0,0,0,0.07)]">
                    <button aria-label="Zoom in" className="flex h-[114px] items-center justify-center">
                        <svg width="38" height="38" viewBox="0 0 38 38" stroke={ORANGE} strokeWidth="5" strokeLinecap="round">
                            <path d="M19 3V35M3 19H35" />
                        </svg>
                    </button>
                    <div className="h-px bg-[#9fb0ab]" />
                    <button aria-label="Zoom out" className="flex h-[114px] items-center justify-center">
                        <svg width="38" height="38" viewBox="0 0 38 38" stroke={ORANGE} strokeWidth="5" strokeLinecap="round">
                            <path d="M3 19H35" />
                        </svg>
                    </button>
                </div>

                <div className="relative mt-[221px] mb-[61px] flex items-center justify-between">
                    <button aria-label="Back" className="flex size-[108px] items-center justify-center rounded-full bg-[#f07019]/72">
                        <svg width="26" height="40" viewBox="0 0 26 40" fill="none" stroke="#fffaf5" strokeWidth="5" strokeLinecap="round" strokeLinejoin="round">
                            <path d="M20 3L4 20L20 37" />
                        </svg>
                    </button>
                    <button className="flex h-[100px] items-center gap-6 rounded-full bg-[#b5dfe8] px-[39px] text-[36px] font-semibold">
                        <DraftIcon />
                        Save draft
                    </button>
                    <button aria-label="Send" className="flex size-[108px] items-center justify-center rounded-full bg-[#f07019]/72">
                        <PlaneIcon />
                    </button>
                </div>
            </main>

            <nav className="relative mx-12 mt-[29px] mb-[108px] flex rounded-full border-[3px] border-[#f4f4f6] bg-[#eeeef0] px-[9px] pt-3 pb-[22px] shadow-[0_12px_60px_rgba(0,0,0,0.07)]">
                {navItems.map((item) => (
                    <a key={item.name} href="#" className="flex flex-1 flex-col items-center">
                        <span className="relative flex h-[90px] items-center justify-center">
                            {item.icon ?? (
                                <span className="flex size-[90px] items-center justify-center rounded-full bg-[#f07019]">
                                    <svg width="32" height="32" viewBox="0 0 32 32" stroke="#fff" strokeWidth="6" strokeLinecap="round">
                                        <path d="M16 3V29M3 16H29" />
                                    </svg>
                                </span>
                            )}
                            {item.badge && (
                                <span className="absolute -top-[5px] -right-[31px] flex h-[46px] w-[52px] items-center justify-center rounded-full border-4 border-[#f1f0f6] bg-[#ff383c] text-[26px] font-bold text-white">
                                    {item.badge}
                                </span>
                            )}
                        </span>
                        <span className={`text-[31px] leading-8 ${item.name === 'Post' ? 'font-semibold text-[#f07019]' : 'font-medium'}`}>{item.name}</span>
                    </a>
                ))}
            </nav>
        </div>
    );
};

export default App;
